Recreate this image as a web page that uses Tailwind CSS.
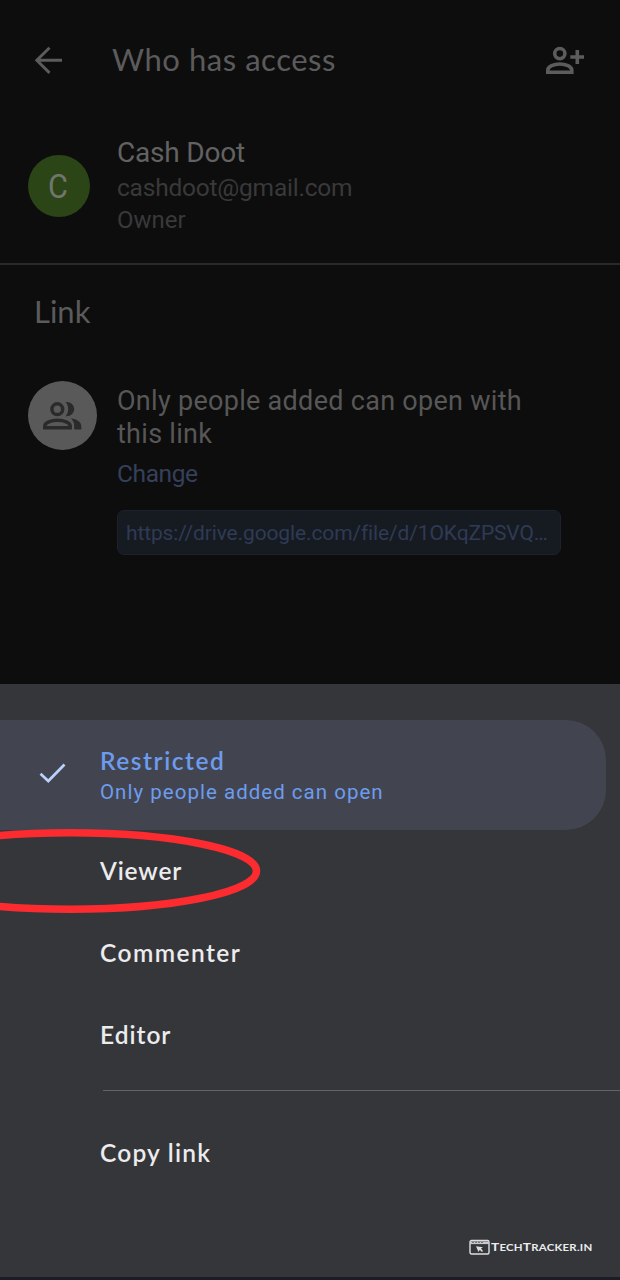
<!DOCTYPE html>
<html lang="en">
<head>
<meta charset="utf-8">
<meta name="viewport" content="width=device-width, initial-scale=1">
<title>Who has access</title>
<script src="https://cdn.jsdelivr.net/npm/@tailwindcss/browser@4"></script>
</head>
<body class="bg-[#0d0d0d]">
<div class="flex h-[1280px] w-[620px] flex-col overflow-hidden font-['Roboto',sans-serif] whitespace-nowrap">
  <main class="h-[684px] shrink-0 bg-[#0d0d0d] text-[#5b5b5c]">
    <header class="flex h-[120px] items-center pl-[29px] pr-[36px]">
      <svg class="size-[40px] shrink-0" viewBox="0 0 40 40" fill="none" stroke="#5c5c5d" stroke-width="2.9"><path d="M33 20.3H8M20.5 7.7L7.8 20.3L20.5 32.9"/></svg>
      <h1 class="mb-[2px] ml-[43px] font-['Lato',sans-serif] text-[31px] leading-[40px] tracking-[0.54px]">Who has access</h1>
      <svg class="ml-auto h-[30px] w-[42px] shrink-0" viewBox="0 0 42 30" fill="none" stroke="#5c5c5d" stroke-width="3.6"><circle cx="17.8" cy="8.6" r="5.1"/><path d="M5.8 27.2V25.2C5.8 21.5 12 19 17.8 19S29.8 21.5 29.8 25.2V27.2Z"/><path d="M35.3 5v14M28.3 12h14"/></svg>
    </header>
    <section class="flex h-[145px] border-b-2 border-[#292929] pl-[28px]">
      <div class="mt-[35px] flex size-[62px] shrink-0 items-center justify-center rounded-full bg-[#2b4517] text-[34px] text-[#71766d]"><span class="-translate-x-px scale-x-90">C</span></div>
      <div class="ml-[27px] pt-[15px]">
        <div class="text-[28px] leading-[36px] tracking-[-0.2px] text-[#626262]">Cash Doot</div>
        <div class="text-[24.5px] leading-[33px] tracking-[-0.22px] text-[#39393a]">cashdoot@gmail.com</div>
        <div class="text-[24px] leading-[32px] text-[#39393a]">Owner</div>
      </div>
    </section>
    <h2 class="pt-[27px] pb-px pl-[34px] font-['Lato',sans-serif] text-[31px] leading-[38px] tracking-[0px]">Link</h2>
    <section class="flex pt-[50px] pl-[28px]">
      <div class="flex size-[69px] shrink-0 items-center justify-center rounded-full bg-[#59595a]">
        <svg class="h-[30px] w-[40px] -translate-x-px" viewBox="0 0 40 30"><g fill="none" stroke="#2a2a2b" stroke-width="3.5"><circle cx="15.3" cy="8.2" r="5.4"/><path d="M2.8 26.8V25C2.8 21.5 9.3 19.3 15.5 19.3S28.2 21.5 28.2 25V26.8Z"/></g><g fill="#2a2a2b"><path d="M23.5 1C28 0.3 32.2 3.6 32.2 8.1S28 15.9 23.5 15.2C27.1 11.3 27.1 4.9 23.5 1Z"/><path d="M28.8 17.6C34.8 18.2 39.3 21 39.3 25.2V28.6H32.2V24.9C32.2 21.8 31 19.5 28.8 17.6Z"/></g></svg>
      </div>
      <div class="ml-[20px] w-[444px] pt-[4px]">
        <p class="text-[27px] leading-[33px] tracking-[0.29px] text-[#575757]">Only people added can open with<br>this link</p>
        <div class="mt-[4px] text-[24.5px] leading-[37px] tracking-[-0.4px] text-[#35405a]">Change</div>
        <div class="mt-[18px] flex h-[45px] items-center rounded-[7px] border border-[#1b222d] bg-[#161a21] pt-[2px] pl-[8px] text-[21px] tracking-[-0.13px] text-[#2f3a55]">https://drive.google.com/file/d/1OKqZPSVQ…</div>
      </div>
    </section>
  </main>

  <section class="relative flex grow flex-col border-b-[3px] border-[#1d1b23] bg-[#353639] pt-[36px] text-[#ececee]">
    <div class="flex h-[110px] w-[606px] items-center rounded-r-[40px] bg-[#424550] pl-[36px] text-[#6d9cee]">
      <svg class="mt-[-4px] h-[26px] w-[32px] shrink-0" viewBox="0 0 32 26" fill="none" stroke="#b9d1fb" stroke-width="2.7"><path d="M4.5 13.8L12.3 21L28.5 4.5"/></svg>
      <div class="ml-[32px] pt-[3px]">
        <div class="font-['Lato',sans-serif] text-[24.5px] leading-[30px] font-semibold tracking-[1.55px]">Restricted</div>
        <div class="text-[20.5px] leading-[32px] tracking-[1.02px]">Only people added can open</div>
      </div>
    </div>
    <ul class="pl-[100px] font-['Lato',sans-serif] text-[24.5px] leading-[82px] font-semibold tracking-[1px]">
      <li class="h-[82px] tracking-[0.85px]">Viewer</li>
      <li class="h-[82px] tracking-[1.45px]">Commenter</li>
      <li class="h-[82px]">Editor</li>
    </ul>
    <hr class="mt-[14px] ml-[103px] border-t-[1.5px] border-[#626367]">
    <div class="mt-[42px] pl-[100px] font-['Lato',sans-serif] text-[24.5px] leading-[40px] font-semibold tracking-[1.2px]">Copy link</div>
    <div class="mt-auto mb-[21px] ml-[469px] flex items-center gap-[1px]">
      <svg class="h-[17px] w-[21px] shrink-0" viewBox="0 0 21 17" fill="none"><rect x="1" y="1.5" width="19" height="13.5" rx="1.5" stroke="#dddde0" stroke-width="1.4"/><path d="M1 3.8H20" stroke="#c9c9cd" stroke-width="2.6"/><path d="M3 3.5H14" stroke="#77777c" stroke-width="1" stroke-dasharray="2 1"/><path d="M7 7.2L14 8.2L12 9.5L14.2 12.2L12.5 12.8L10.8 10.8L9.5 13Z" fill="#dddde0"/></svg>
      <span class="origin-left scale-x-[1.14] font-['Lato',sans-serif] text-[10px] leading-[17px] font-bold tracking-[0.2px] uppercase"><span class="text-[12px]">T</span>ech<span class="text-[12px]">T</span>racker.in</span>
    </div>
    <svg class="pointer-events-none absolute top-[140px] left-0 h-[94px] w-[270px]" viewBox="0 0 270 94" fill="none"><ellipse cx="70" cy="47" rx="186.5" ry="38.2" stroke="#fc2b30" stroke-width="7.5"/></svg>
  </section>
</div>
</body>
</html>
